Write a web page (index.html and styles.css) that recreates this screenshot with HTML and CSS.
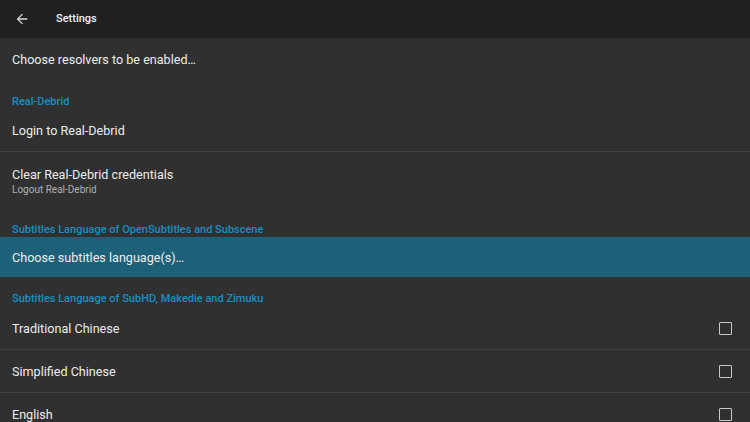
FILE: index.html
```html
<!DOCTYPE html>
<html>
<head>
<meta charset="utf-8">
<link rel="stylesheet" href="styles.css">
</head>
<body>
<div class="app">
  <header class="toolbar">
    <svg class="back" width="16" height="16" viewBox="0 0 24 24"><path d="M20 11H7.83l5.59-5.59L12 4l-8 8 8 8 1.41-1.41L7.83 13H20v-2z" fill="#d8d8d8"/></svg>
    <span class="title">Settings</span>
  </header>
  <main class="list">
    <div class="item first"><span class="label">Choose resolvers to be enabled…</span></div>
    <div class="category">Real-Debrid</div>
    <div class="item"><span class="label">Login to Real-Debrid</span></div>
    <div class="divider"></div>
    <div class="item two"><span class="label">Clear Real-Debrid credentials</span><span class="summary">Logout Real-Debrid</span></div>
    <div class="category">Subtitles Language of OpenSubtitles and Subscene</div>
    <div class="item selected"><span class="label">Choose subtitles language(s)…</span></div>
    <div class="category tall">Subtitles Language of SubHD, Makedie and Zimuku</div>
    <div class="item check"><span class="label">Traditional Chinese</span><span class="box"></span></div>
    <div class="divider"></div>
    <div class="item check"><span class="label">Simplified Chinese</span><span class="box"></span></div>
    <div class="divider"></div>
    <div class="item check"><span class="label">English</span><span class="box"></span></div>
  </main>
</div>
</body>
</html>
```
FILE: styles.css
```css
html, body {
  margin: 0;
  padding: 0;
  background: #303030;
  overflow: hidden;
}
.app {
  width: 750px;
  height: 422px;
  font-family: Roboto, "Liberation Sans", sans-serif;
  color: #ececec;
}
.toolbar {
  height: 37px;
  background: #212021;
  display: flex;
  align-items: center;
  box-shadow: 0 1px 1px rgba(0,0,0,0.35);
  position: relative;
}
.back {
  margin-left: 14px;
  margin-right: 26px;
}
.title {
  font-size: 11px;
  font-weight: 500;
  color: #f2f2f2;
}
.list {
  display: flex;
  flex-direction: column;
}
.item {
  height: 42px;
  padding: 0 12px;
  display: flex;
  align-items: center;
  font-size: 12.6px;
  flex-shrink: 0;
}
.item.first {
  height: 45px;
}
.item.two {
  height: 58px;
  flex-direction: column;
  align-items: flex-start;
  justify-content: center;
}
.summary {
  font-size: 10px;
  color: #b0b0b0;
  margin-top: 2px;
}
.item.selected {
  background: #1d6179;
  height: 40px;
}
.item.check {
  justify-content: space-between;
  padding-right: 18px;
}
.box {
  width: 11px;
  height: 11px;
  border: 1.5px solid #c8c8c8;
  border-radius: 1px;
}
.divider {
  height: 1px;
  background: #3f3f3f;
  flex-shrink: 0;
}
.category {
  height: 27px;
  padding: 0 12px;
  display: flex;
  align-items: flex-end;
  padding-bottom: 1px;
  box-sizing: border-box;
  font-size: 11px;
  font-weight: 500;
  color: #1b8ec1;
  flex-shrink: 0;
}
.category.tall {
  height: 30px;
  padding-bottom: 2px;
}
```
